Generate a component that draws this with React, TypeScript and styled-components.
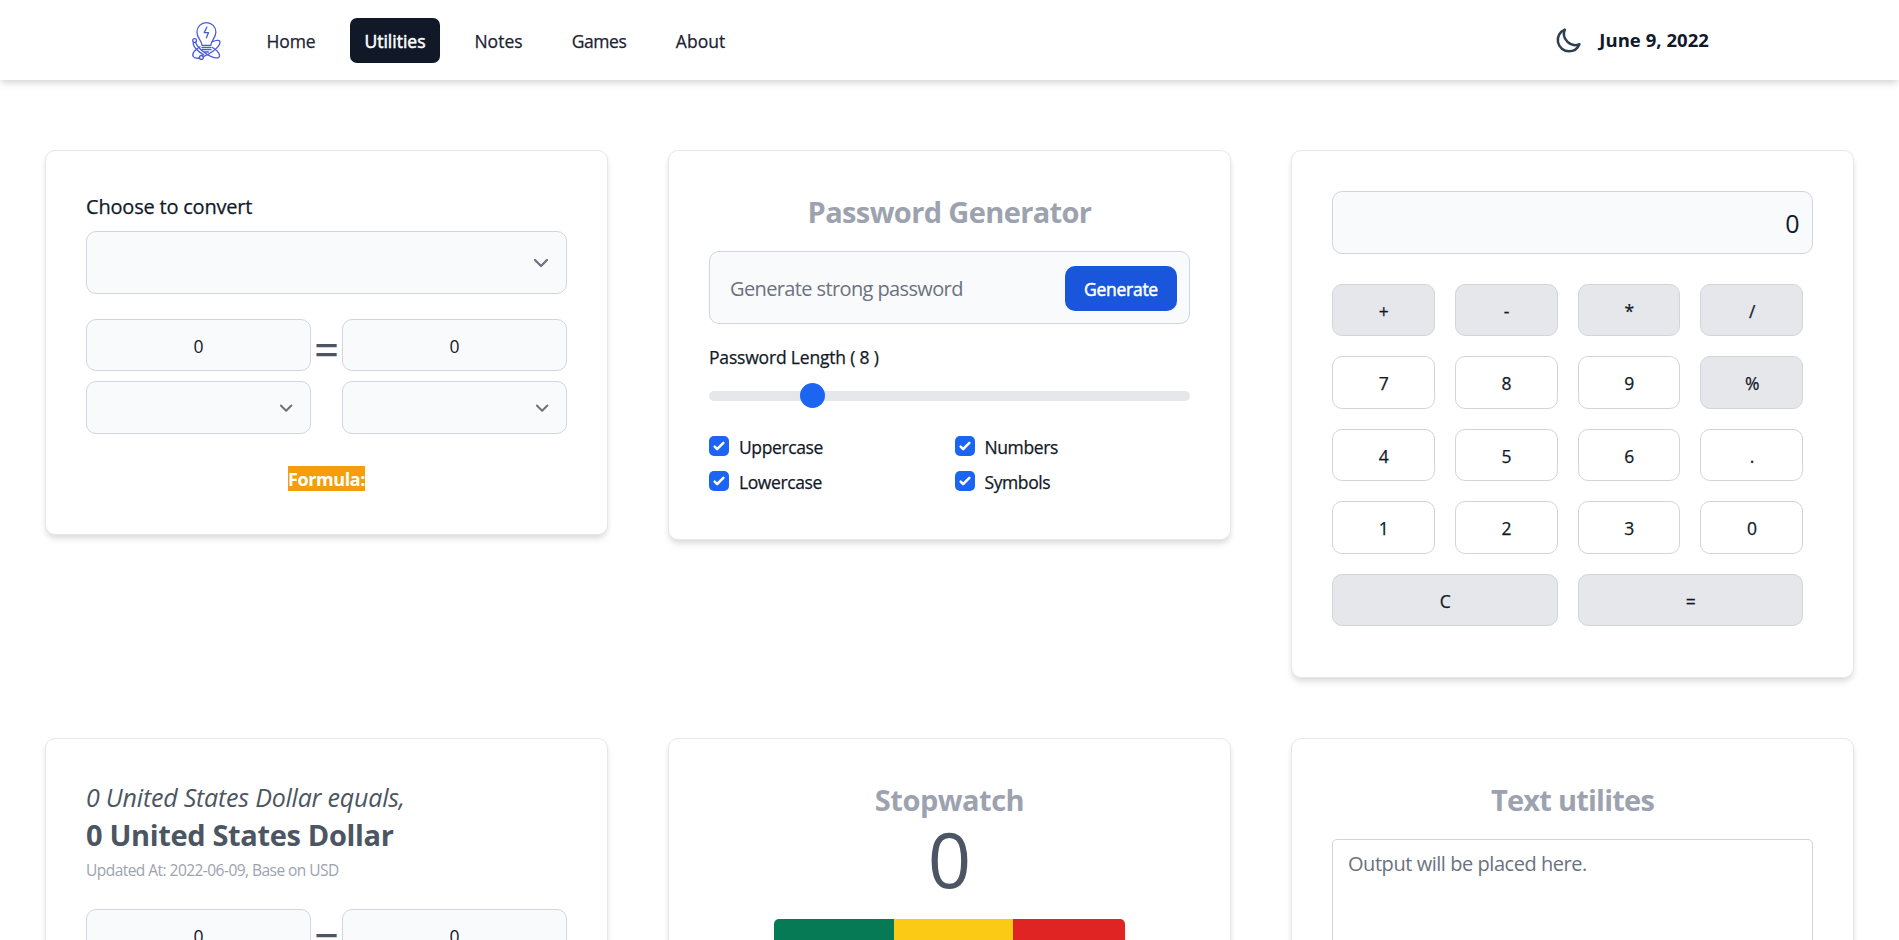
import React from 'react';
import styled, { createGlobalStyle } from 'styled-components';

const Global = createGlobalStyle`
  *, *::before, *::after { box-sizing: border-box; }
  body {
    margin: 0;
    overflow: hidden;
    background: #fff;
    color: #111928;
    font-family: "Open Sans", "Noto Sans", sans-serif;
    font-size: 17.5px;
    line-height: 25px;
  }
`;

const Page = styled.div`
  height: 940px;
  overflow: hidden;
`;

const Nav = styled.nav`
  display: flex;
  align-items: center;
  justify-content: space-between;
  height: 80px;
  padding: 0 190px 0 188px;
  background: #fff;
  box-shadow: 0 5px 7.5px -1px rgba(0, 0, 0, 0.1), 0 2.5px 5px -1px rgba(0, 0, 0, 0.08);
`;

const NavGroup = styled.div<{ $gap: number }>`
  display: flex;
  align-items: center;
  gap: ${p => p.$gap}px;
`;

const LogoMark = styled.svg`
  width: 36px;
  height: 46px;
  margin: -1px 8px 0 0;
`;

const NavLink = styled.a<{ $active?: boolean; $width: number; $spacing?: number }>`
  display: flex;
  justify-content: center;
  width: ${p => p.$width}px;
  height: 45px;
  margin-top: 1px;
  padding-top: 11px;
  border-radius: 7px;
  background: ${p => (p.$active ? '#111928' : 'transparent')};
  color: ${p => (p.$active ? '#fff' : '#1a2233')};
  letter-spacing: ${p => p.$spacing ?? 0}px;
  -webkit-text-stroke: ${p => (p.$active ? '0.5px #fff' : '0.25px #1a2233')};
`;

const MoonIcon = styled.svg`
  width: 30px;
  height: 30px;
  color: #2f3f50;
`;

const Today = styled.span`
  margin-top: -1px;
  font-size: 18.5px;
  font-weight: 700;
  letter-spacing: 0.05px;
  white-space: nowrap;
`;

const Grid = styled.main`
  display: grid;
  grid-template-columns: repeat(3, 1fr);
  gap: 60px;
  align-items: start;
  padding: 70px 45px 60px;
`;

const Card = styled.section<{ $bottom?: number }>`
  display: flex;
  flex-direction: column;
  padding: 40px 40px ${p => p.$bottom ?? 40}px;
  border: 1px solid #e5e7eb;
  border-radius: 10px;
  background: #fff;
  box-shadow: 0 5px 7.5px -1px rgba(0, 0, 0, 0.1), 0 2.5px 5px -1px rgba(0, 0, 0, 0.06);
`;

const CardTitle = styled.h2<{ $spacing: number }>`
  margin: 0;
  height: 40px;
  padding-top: 1px;
  color: #9ca3af;
  font-size: 29px;
  font-weight: 700;
  line-height: 39px;
  letter-spacing: ${p => p.$spacing}px;
  text-align: center;
`;

const FieldLabel = styled.label`
  padding-top: 1px;
  margin-bottom: 9px;
  font-size: 20px;
  line-height: 30px;
  letter-spacing: -0.2px;
  -webkit-text-stroke: 0.25px #111928;
`;

const Box = styled.div`
  display: flex;
  align-items: center;
  border: 1px solid #d1d5db;
  border-radius: 10px;
  background: #f9fafb;
`;

const SelectBox = styled(Box)<{ $large?: boolean }>`
  justify-content: flex-end;
  height: ${p => (p.$large ? 62.75 : 52.5)}px;
  padding: 1px ${p => (p.$large ? 10 : 10.5)}px 0 0;
  color: #6b7280;

  svg {
    width: ${p => (p.$large ? 30 : 26.25)}px;
    height: ${p => (p.$large ? 30 : 26.25)}px;
  }
`;

const NumberBox = styled(Box)`
  justify-content: center;
  height: 52.5px;
  padding-top: 2.5px;
`;

const Exchange = styled.div<{ $top: number }>`
  display: grid;
  grid-template-columns: 1fr 31px 1fr;
  row-gap: 10px;
  margin-top: ${p => p.$top}px;
`;

const EqualSign = styled.span`
  align-self: start;
  height: 52px;
  padding-top: 4px;
  color: #4b5563;
  font-size: 43px;
  line-height: 53px;
  text-align: center;
  -webkit-text-stroke: 0.4px #4b5563;
`;

const FormulaRow = styled.div`
  display: flex;
  justify-content: center;
  margin-top: 32.25px;
`;

const Formula = styled.span`
  width: 77px;
  height: 25px;
  padding-top: 1px;
  background: #f59e0b;
  color: #fff;
  font-size: 18px;
  font-weight: 700;
  line-height: 24px;
  letter-spacing: -0.4px;
  text-align: center;
`;

const PasswordField = styled(Box)`
  justify-content: space-between;
  height: 73px;
  margin-top: 20px;
  padding: 1px 12px 0 20px;
`;

const Placeholder = styled.span<{ $spacing: number }>`
  color: #6b7280;
  font-size: 20px;
  line-height: 30px;
  letter-spacing: ${p => p.$spacing}px;

  ${PasswordField} & {
    padding-top: 2px;
  }
`;

const GenerateButton = styled.button`
  width: 112px;
  height: 45px;
  padding: 2px 0 0;
  border: 0;
  border-radius: 10px;
  background: #1a56db;
  color: #fff;
  font: inherit;
  letter-spacing: -0.28px;
  -webkit-text-stroke: 0.5px #fff;
`;

const LengthLabel = styled.label`
  margin-top: 21px;
  letter-spacing: -0.18px;
  -webkit-text-stroke: 0.25px #111928;
`;

const Track = styled.div`
  display: flex;
  align-items: center;
  height: 10px;
  margin-top: 21px;
  padding-left: 91px;
  border-radius: 5px;
  background: #e5e7eb;
`;

const Thumb = styled.span`
  width: 25px;
  height: 25px;
  margin-top: -1px;
  border-radius: 50%;
  background: #1c64f2;
`;

const Options = styled.div`
  display: grid;
  grid-template-columns: 245.5px 1fr;
  row-gap: 10px;
  margin-top: 34px;
`;

const Option = styled.label`
  display: flex;
  align-items: center;
  gap: 10px;
  letter-spacing: -0.4px;
  -webkit-text-stroke: 0.25px #111928;
`;

const Check = styled.svg`
  width: 20px;
  height: 20px;
  margin-top: -3px;
  border-radius: 5px;
  background: #1c64f2;
`;

const Display = styled(Box)`
  justify-content: flex-end;
  height: 62.75px;
  padding: 2.5px 12.5px 0 0;
  font-size: 25px;
`;

const Keypad = styled.div`
  display: grid;
  grid-template-columns: repeat(4, 1fr);
  column-gap: 20px;
  row-gap: 20px;
  margin: 30px 10px 10px 0;
`;

const Key = styled.button<{ $muted?: boolean; $wide?: boolean }>`
  grid-column: span ${p => (p.$wide ? 2 : 1)};
  height: 52.5px;
  padding: 2.5px 0 0 1px;
  border: 1px solid #d1d5db;
  border-radius: 10px;
  background: ${p => (p.$muted ? '#e5e7eb' : '#fff')};
  color: #111928;
  font: inherit;
  -webkit-text-stroke: 0.25px #111928;
`;

const FromAmount = styled.p`
  margin: 0;
  color: #4b5563;
  font-size: 25px;
  font-style: italic;
  line-height: 36px;
  letter-spacing: -0.21px;
`;

const ToAmount = styled.p`
  margin: 0;
  padding-top: 2px;
  color: #4b5563;
  font-size: 29px;
  font-weight: 700;
  line-height: 36px;
  letter-spacing: -0.34px;
`;

const Updated = styled.p`
  margin: 5px 0 0;
  color: #9ca3af;
  font-size: 15.5px;
  letter-spacing: -0.54px;
`;

const Elapsed = styled.div`
  height: 78px;
  color: #4b5563;
  font-size: 76px;
  line-height: 79px;
  text-align: center;
`;

const Controls = styled.div`
  display: flex;
  align-self: center;
  margin-top: 22px;
  border-radius: 5px;
  overflow: hidden;
  box-shadow: 0 5px 7.5px -1px rgba(0, 0, 0, 0.1);
`;

const Control = styled.button<{ $color: string; $width: number }>`
  width: ${p => p.$width}px;
  height: 60px;
  border: 0;
  background: ${p => p.$color};
`;

const Output = styled.div`
  height: 240px;
  margin-top: 20px;
  padding: 9px 15px;
  border: 1px solid #d1d5db;
  border-radius: 5px;
`;

const Chevron = () => (
  <svg viewBox="0 0 20 20" fill="none" stroke="currentColor" strokeWidth="1.5" strokeLinecap="round" strokeLinejoin="round">
    <path d="M6 8l4 4 4-4" />
  </svg>
);

const Logo = () => (
  <LogoMark viewBox="0 0 36 46" fill="none" stroke="#4a5bd8" strokeWidth="1.3" strokeLinecap="round" strokeLinejoin="round">
    <path d="M13.8 27.5c0-3.8-4.900-6.200-4.900-12.400a9.500 9.500 0 0 1 19 0c0 6.200-4.900 8.600-4.900 12.400" />
    <path d="M18.8 10.2l-2.6 5.400h4.300l-2.100 5.200" />
    <path d="M14 28.300h9M14 30.500h9M14 32.700h9M16.600 35h3.800" />
    <path d="M7.500 25.200C9.500 31 20 39.800 27.500 40.800C34 41.400 32.500 35.500 24.500 30.500" />
    <path d="M24.500 24.800C29 22.300 33.500 23 31.500 27.200C29.500 31.500 21.500 37.500 14.800 39.800" />
    <path d="M11.600 41C4.500 42.400 3.500 37.700 6.300 34.300C8 32.500 9.800 31.100 12 29.800" />
    <path d="M5.300 25.600C4.600 29 9.500 34.500 15.800 37.800" />
    <circle cx="6.600" cy="23.600" r="1.900" />
    <circle cx="13.400" cy="40.400" r="1.900" />
  </LogoMark>
);

const Moon = () => (
  <MoonIcon viewBox="0 0 24 24" fill="none" stroke="currentColor" strokeWidth="2" strokeLinecap="round" strokeLinejoin="round">
    <path d="M20.354 15.354A9 9 0 018.646 3.646 9.003 9.003 0 0012 21a9.003 9.003 0 008.354-5.646z" />
  </MoonIcon>
);

const CheckOption = ({ label }: { label: string }) => (
  <Option>
    <Check viewBox="0 0 16 16" fill="#fff">
      <path d="M12.207 4.793a1 1 0 010 1.414l-5 5a1 1 0 01-1.414 0l-2-2a1 1 0 011.414-1.414L6.500 9.086l4.293-4.293a1 1 0 011.414 0z" />
    </Check>
    {label}
  </Option>
);

const Converter = ({ top }: { top: number }) => (
  <Exchange $top={top}>
    <NumberBox>0</NumberBox>
    <EqualSign>=</EqualSign>
    <NumberBox>0</NumberBox>
    <SelectBox><Chevron /></SelectBox>
    <span />
    <SelectBox><Chevron /></SelectBox>
  </Exchange>
);

const links = [
  { label: 'Home', width: 78, spacing: -0.1 },
  { label: 'Utilities', width: 90, active: true },
  { label: 'Notes', width: 77 },
  { label: 'Games', width: 84, spacing: -0.45 },
  { label: 'About', width: 79 },
];

const keys = [
  '+', '-', '*', '/',
  '7', '8', '9', '%',
  '4', '5', '6', '.',
  '1', '2', '3', '0',
];

export default function App() {
  return (
    <Page>
      <Global />
      <Nav>
        <NavGroup $gap={20}>
          <Logo />
          {links.map(l => (
            <NavLink key={l.label} $active={l.active} $width={l.width} $spacing={l.spacing}>
              {l.label}
            </NavLink>
          ))}
        </NavGroup>
        <NavGroup $gap={15}>
          <Moon />
          <Today>June 9, 2022</Today>
        </NavGroup>
      </Nav>
      <Grid>
        <Card $bottom={42.5}>
          <FieldLabel>Choose to convert</FieldLabel>
          <SelectBox $large><Chevron /></SelectBox>
          <Converter top={25} />
          <FormulaRow><Formula>Formula:</Formula></FormulaRow>
        </Card>
        <Card $bottom={44}>
          <CardTitle $spacing={-0.63}>Password Generator</CardTitle>
          <PasswordField>
            <Placeholder $spacing={-0.62}>Generate strong password</Placeholder>
            <GenerateButton>Generate</GenerateButton>
          </PasswordField>
          <LengthLabel>Password Length ( 8 )</LengthLabel>
          <Track><Thumb /></Track>
          <Options>
            <CheckOption label="Uppercase" />
            <CheckOption label="Numbers" />
            <CheckOption label="Lowercase" />
            <CheckOption label="Symbols" />
          </Options>
        </Card>
        <Card $bottom={40.25}>
          <Display>0</Display>
          <Keypad>
            {keys.map(k => (
              <Key key={k} $muted={'+-*/%'.includes(k)}>{k}</Key>
            ))}
            <Key $muted $wide>C</Key>
            <Key $muted $wide>=</Key>
          </Keypad>
        </Card>
        <Card>
          <FromAmount>0 United States Dollar equals,</FromAmount>
          <ToAmount>0 United States Dollar</ToAmount>
          <Updated>Updated At: 2022-06-09, Base on USD</Updated>
          <Converter top={26} />
        </Card>
        <Card>
          <CardTitle $spacing={-0.5}>Stopwatch</CardTitle>
          <Elapsed>0</Elapsed>
          <Controls>
            <Control $color="#057a55" $width={120} />
            <Control $color="#faca15" $width={119} />
            <Control $color="#e02424" $width={112} />
          </Controls>
        </Card>
        <Card>
          <CardTitle $spacing={-0.77}>Text utilites</CardTitle>
          <Output>
            <Placeholder $spacing={-0.45}>Output will be placed here.</Placeholder>
          </Output>
        </Card>
      </Grid>
    </Page>
  );
}
